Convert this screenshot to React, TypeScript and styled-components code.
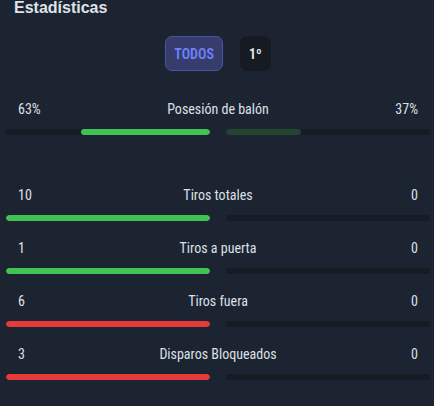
import styled, { createGlobalStyle } from "styled-components";

const GlobalStyle = createGlobalStyle`
  html, body {
    margin: 0;
    padding: 0;
    background: #1c2331;
  }
  body {
    font-family: Roboto, "Liberation Sans", sans-serif;
    font-stretch: 75%;
    color: #dce0e6;
  }
`;

const Panel = styled.div`
  width: 434px;
  height: 406px;
  box-sizing: border-box;
  padding: 0 4px 0 6px;
  background: #1c2331;
  display: flex;
  flex-direction: column;
  overflow: hidden;
`;

const Title = styled.h2`
  margin: 0 0 0 8px;
  font-family: "Liberation Sans", Arial, sans-serif;
  font-stretch: normal;
  font-size: 16px;
  line-height: 16px;
  font-weight: 700;
  color: #dfe3e9;
`;

const Filters = styled.div`
  display: flex;
  justify-content: center;
  gap: 17px;
  margin-top: 20px;
`;

const FilterButton = styled.button<{ $active?: boolean }>`
  height: 35px;
  padding: 0 8px;
  box-sizing: border-box;
  border-radius: 7px;
  border: 1px solid ${(p) => (p.$active ? "#4a54a6" : "#151a23")};
  background: ${(p) => (p.$active ? "#363d6d" : "#151a23")};
  color: ${(p) => (p.$active ? "#7080fb" : "#e6e9ee")};
  font-family: inherit;
  font-stretch: inherit;
  font-size: 14px;
  font-weight: 600;
  cursor: pointer;
`;

const StatList = styled.div`
  display: flex;
  flex-direction: column;
  gap: 19px;
`;

const StatRow = styled.div<{ $spaced?: boolean }>`
  display: flex;
  flex-direction: column;
  gap: 12px;
  margin-top: ${(p) => (p.$spaced ? "30px" : "0")};
  margin-bottom: ${(p) => (p.$spaced ? "33px" : "0")};
`;

const Labels = styled.div`
  display: grid;
  grid-template-columns: 1fr auto 1fr;
  align-items: center;
  padding: 0 12px;
  font-size: 14px;
  font-weight: 400;
  line-height: 16px;
`;

const Value = styled.span<{ $right?: boolean }>`
  text-align: ${(p) => (p.$right ? "right" : "left")};
`;

const Name = styled.span`
  text-align: center;
`;

const Bars = styled.div`
  display: grid;
  grid-template-columns: 1fr 1fr;
  gap: 16px;
`;

const Track = styled.div<{ $reverse?: boolean }>`
  height: 6px;
  border-radius: 3px;
  background: #161b24;
  display: flex;
  justify-content: ${(p) => (p.$reverse ? "flex-end" : "flex-start")};
  overflow: hidden;
`;

const Fill = styled.div<{ $color: string }>`
  height: 100%;
  border-radius: 3px;
  background: ${(p) => p.$color};
`;

type Stat = {
  name: string;
  home: number;
  away: number;
  suffix?: string;
  color: string;
  awayColor: string;
};

const stats: Stat[] = [
  { name: "Posesión de balón", home: 63, away: 37, suffix: "%", color: "#42c253", awayColor: "#23452f" },
  { name: "Tiros totales", home: 10, away: 0, color: "#42c253", awayColor: "#23452f" },
  { name: "Tiros a puerta", home: 1, away: 0, color: "#42c253", awayColor: "#23452f" },
  { name: "Tiros fuera", home: 6, away: 0, color: "#e5393b", awayColor: "#5a2328" },
  { name: "Disparos Bloqueados", home: 3, away: 0, color: "#e5393b", awayColor: "#5a2328" },
];

const App = () => {
  return (
    <Panel>
      <GlobalStyle />
      <Title>Estadísticas</Title>
      <Filters>
        <FilterButton $active>TODOS</FilterButton>
        <FilterButton>1º</FilterButton>
      </Filters>
      <StatList>
        {stats.map((s, i) => {
          const total = s.home + s.away || 1;
          const homePct = (s.home / total) * 100;
          const awayPct = (s.away / total) * 100;
          return (
            <StatRow key={s.name} $spaced={i === 0}>
              <Labels>
                <Value>
                  {s.home}
                  {s.suffix}
                </Value>
                <Name>{s.name}</Name>
                <Value $right>
                  {s.away}
                  {s.suffix}
                </Value>
              </Labels>
              <Bars>
                <Track $reverse>
                  <Fill $color={s.color} style={{ width: `${homePct}%` }} />
                </Track>
                <Track>
                  <Fill $color={s.awayColor} style={{ width: `${awayPct}%` }} />
                </Track>
              </Bars>
            </StatRow>
          );
        })}
      </StatList>
    </Panel>
  );
};

export default App;
